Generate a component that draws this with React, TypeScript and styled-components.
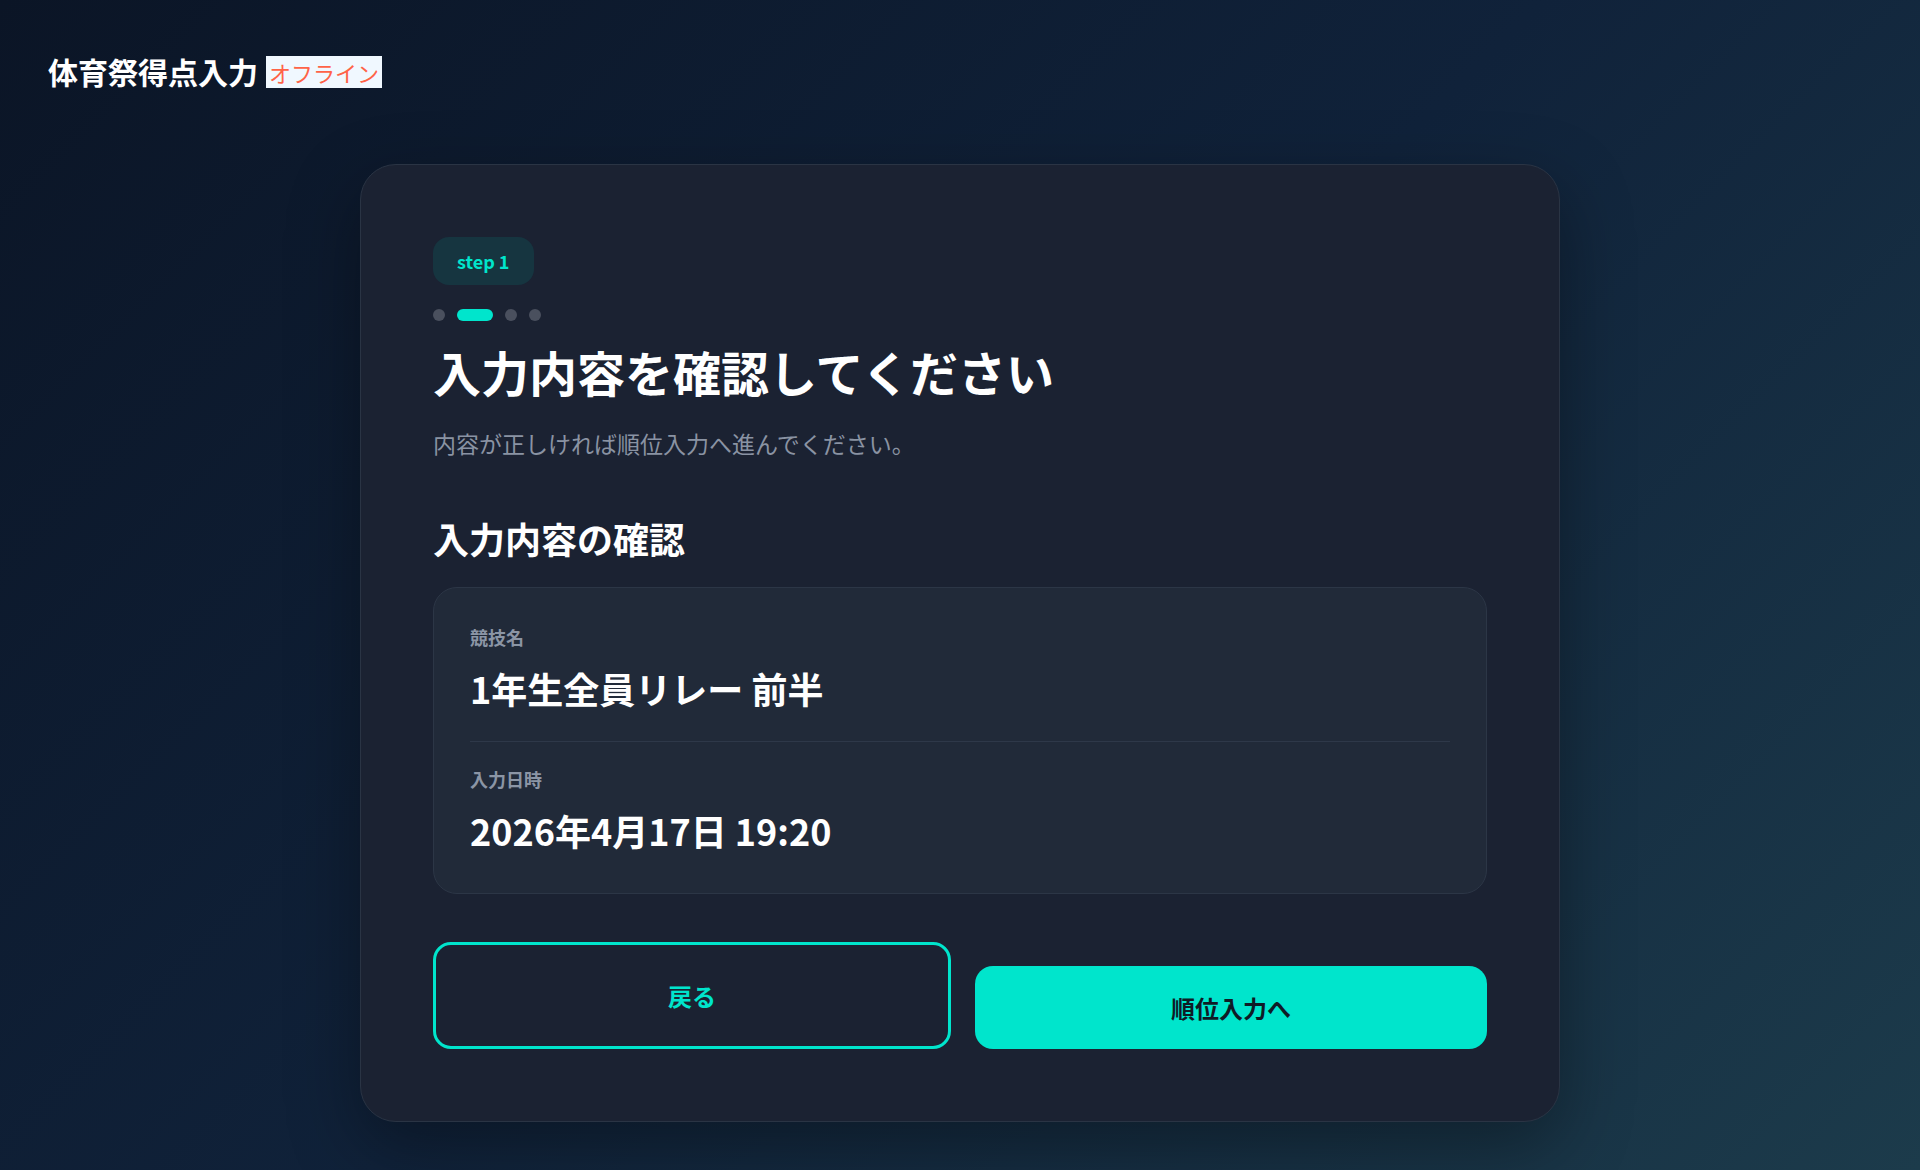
import React from "react";
import styled, { createGlobalStyle } from "styled-components";

const GlobalStyle = createGlobalStyle`
  body {
    margin: 0;
    font-family: "Noto Sans CJK JP", "Noto Sans", sans-serif;
  }
`;

const Page = styled.div`
  min-height: 100vh;
  box-sizing: border-box;
  padding: 50px 48px 48px;
  background: linear-gradient(135deg, #0b1526 0%, #10223a 50%, #1c3b4b 100%);
`;

const Header = styled.header`
  display: flex;
  align-items: center;
  gap: 8px;
`;

const AppTitle = styled.h1`
  margin: 0;
  font-size: 30px;
  line-height: 43px;
  font-weight: 700;
  color: #ffffff;
`;

const OfflineBadge = styled.span`
  background: #f0f8ff;
  color: #ff6347;
  font-size: 22px;
  line-height: 32px;
  padding: 0 3px;
`;

const Card = styled.main`
  width: 1200px;
  box-sizing: border-box;
  margin: 71px auto 0;
  padding: 72px;
  background: #1b2232;
  border: 1px solid #2a3444;
  border-radius: 36px;
  box-shadow: 0 24px 70px rgba(0, 0, 0, 0.35);
`;

const StepBadge = styled.div`
  display: inline-flex;
  align-items: center;
  height: 48px;
  padding: 0 24px;
  border-radius: 16px;
  background: #163540;
  color: #00e5cc;
  font-size: 18px;
  font-weight: 700;
`;

const Dots = styled.div`
  display: flex;
  gap: 12px;
  margin-top: 24px;
`;

const Dot = styled.span<{ $active?: boolean }>`
  width: ${({ $active }) => ($active ? "36px" : "12px")};
  height: 12px;
  border-radius: 6px;
  background: ${({ $active }) => ($active ? "#00e5cc" : "#4a505e")};
`;

const Heading = styled.h2`
  margin: 19px 0 0;
  font-size: 48px;
  line-height: 62px;
  font-weight: 700;
  color: #ffffff;
`;

const Subtitle = styled.p`
  margin: 24px 0 0;
  font-size: 23px;
  line-height: 35px;
  color: #8a93a3;
`;

const SectionTitle = styled.h3`
  margin: 52px 0 0;
  font-size: 36px;
  line-height: 50px;
  font-weight: 700;
  color: #ffffff;
`;

const InfoBox = styled.section`
  margin-top: 24px;
  padding: 36px 36px 36px;
  background: #212a39;
  border: 1px solid #2c3646;
  border-radius: 24px;
`;

const InfoRow = styled.div`
  padding-bottom: 26px;

  & + & {
    padding-top: 24px;
    padding-bottom: 0;
    border-top: 1px solid #2e3849;
  }
`;

const Label = styled.div`
  font-size: 18px;
  line-height: 27px;
  font-weight: 700;
  color: #8b95a5;
`;

const Value = styled.div`
  margin-top: 10px;
  font-size: 36px;
  line-height: 54px;
  font-weight: 700;
  color: #ffffff;
`;

const Actions = styled.div`
  display: flex;
  align-items: flex-end;
  gap: 24px;
  margin-top: 48px;
`;

const ActionButton = styled.button<{ $primary?: boolean }>`
  flex: 1;
  box-sizing: border-box;
  height: ${({ $primary }) => ($primary ? "83px" : "107px")};
  border-radius: 18px;
  border: ${({ $primary }) => ($primary ? "none" : "3px solid #00e5cc")};
  background: ${({ $primary }) => ($primary ? "#00e5cc" : "transparent")};
  color: ${({ $primary }) => ($primary ? "#0f1b26" : "#00e5cc")};
  font-family: inherit;
  font-size: 24px;
  font-weight: 700;
  cursor: pointer;
`;

const steps = [false, true, false, false];

const App: React.FC = () => {
  return (
    <>
      <GlobalStyle />
      <Page>
        <Header>
          <AppTitle>体育祭得点入力</AppTitle>
          <OfflineBadge>オフライン</OfflineBadge>
        </Header>
        <Card>
          <StepBadge>step 1</StepBadge>
          <Dots>
            {steps.map((active, i) => (
              <Dot key={i} $active={active} />
            ))}
          </Dots>
          <Heading>入力内容を確認してください</Heading>
          <Subtitle>内容が正しければ順位入力へ進んでください。</Subtitle>
          <SectionTitle>入力内容の確認</SectionTitle>
          <InfoBox>
            <InfoRow>
              <Label>競技名</Label>
              <Value>1年生全員リレー 前半</Value>
            </InfoRow>
            <InfoRow>
              <Label>入力日時</Label>
              <Value>2026年4月17日 19:20</Value>
            </InfoRow>
          </InfoBox>
          <Actions>
            <ActionButton>戻る</ActionButton>
            <ActionButton $primary>順位入力へ</ActionButton>
          </Actions>
        </Card>
      </Page>
    </>
  );
};

export default App;
